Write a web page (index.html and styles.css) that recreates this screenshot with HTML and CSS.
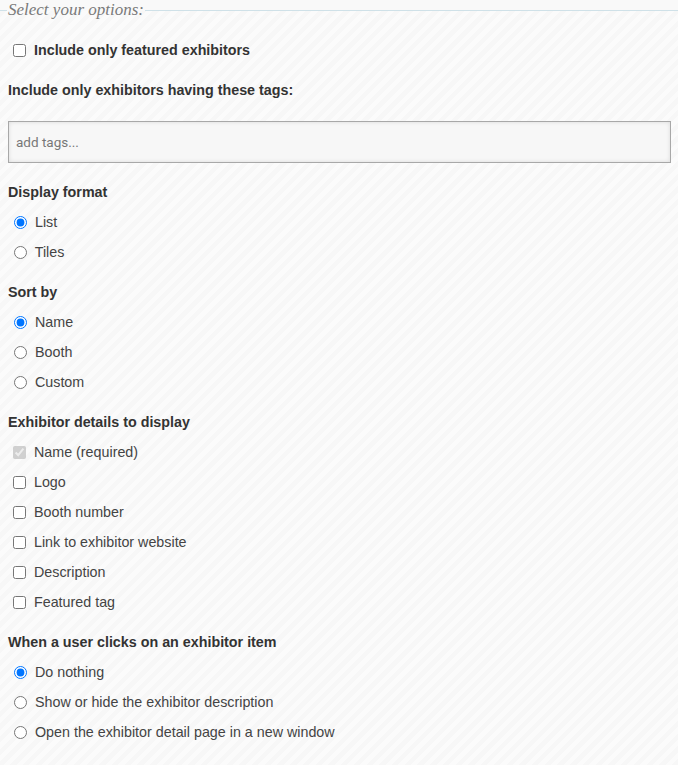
FILE: index.html
```html
<!DOCTYPE html>
<html>
<head>
<meta charset="utf-8">
<link rel="stylesheet" href="styles.css">
</head>
<body>
<fieldset class="options">
  <legend class="options-legend">Select your options:</legend>
  <label class="row row-first bold"><input type="checkbox" class="cb"> Include only featured exhibitors</label>
  <div class="row heading">Include only exhibitors having these tags:</div>
  <div class="tags-input"><span class="placeholder">add tags...</span></div>
  <div class="row heading heading-after-input">Display format</div>
  <label class="row"><input type="radio" name="fmt" class="rd" checked> List</label>
  <label class="row"><input type="radio" name="fmt" class="rd"> Tiles</label>
  <div class="row heading">Sort by</div>
  <label class="row"><input type="radio" name="sort" class="rd" checked> Name</label>
  <label class="row"><input type="radio" name="sort" class="rd"> Booth</label>
  <label class="row"><input type="radio" name="sort" class="rd"> Custom</label>
  <div class="row heading">Exhibitor details to display</div>
  <label class="row"><input type="checkbox" class="cb" checked disabled> Name (required)</label>
  <label class="row"><input type="checkbox" class="cb"> Logo</label>
  <label class="row"><input type="checkbox" class="cb"> Booth number</label>
  <label class="row"><input type="checkbox" class="cb"> Link to exhibitor website</label>
  <label class="row"><input type="checkbox" class="cb"> Description</label>
  <label class="row"><input type="checkbox" class="cb"> Featured tag</label>
  <div class="row heading">When a user clicks on an exhibitor item</div>
  <label class="row"><input type="radio" name="click" class="rd" checked> Do nothing</label>
  <label class="row"><input type="radio" name="click" class="rd"> Show or hide the exhibitor description</label>
  <label class="row"><input type="radio" name="click" class="rd"> Open the exhibitor detail page in a new window</label>
</fieldset>
</body>
</html>
```

FILE: styles.css
```css
html, body {
  margin: 0;
  padding: 0;
  background: #f9f9f9;
}
body {
  font-family: "Liberation Sans", Arial, sans-serif;
  font-size: 14.3px;
  color: #444;
}
.options {
  margin: 0;
  padding: 0 7px 20px 8px;
  border: 0;
  border-top: 1px solid #cfe1e8;
  background: repeating-linear-gradient(135deg, #f7f7f7 0 4.5px, #fbfbfb 4.5px 9px);
  min-height: 740px;
}
.options-legend {
  font-family: "Liberation Serif", "Times New Roman", serif;
  font-style: italic;
  font-size: 17px;
  color: #7a7a7a;
  padding: 0 1px;
  margin-left: -1px;
  line-height: 20px;
}
.row {
  display: flex;
  align-items: center;
  height: 30px;
  white-space: pre;
}
.row-first {
  margin-top: 15px;
}
.bold, .heading {
  font-weight: bold;
  color: #333;
}
.heading {
  margin-top: 10px;
}
.heading-after-input {
  margin-top: 14px;
}
.cb {
  margin: 0 4px 0 5px;
  width: 13px;
  height: 13px;
}
.rd {
  margin: 0 4px 0 6px;
  width: 13px;
  height: 13px;
}
.tags-input {
  margin-top: 16px;
  height: 40px;
  border: 1px solid #a8a8a8;
  background: #f7f7f7;
  box-shadow: inset 0 0 4px rgba(0,0,0,0.12);
  display: flex;
  align-items: center;
  padding-left: 7px;
}
.placeholder {
  font-family: Roboto, "Liberation Sans", sans-serif;
  font-size: 13.5px;
  color: #777;
}
```
